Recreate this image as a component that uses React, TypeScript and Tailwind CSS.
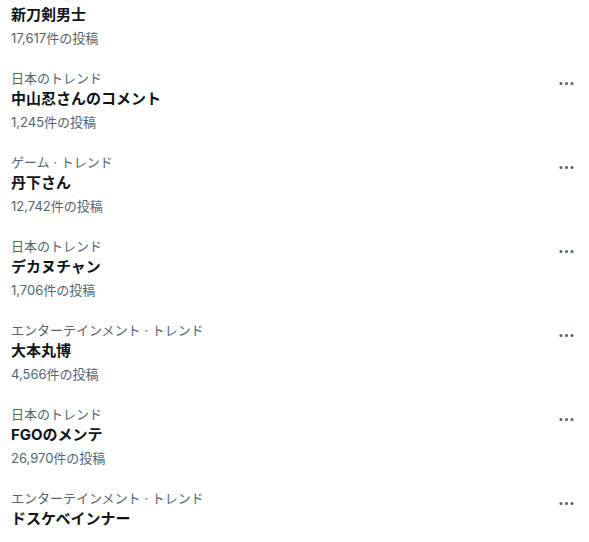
import React from 'react';

type Trend = {
    category: string;
    title: string;
    posts?: string;
    noMenu?: boolean;
};

const TRENDS: Trend[] = [
    { category: 'エンターテインメント · トレンド', title: '新刀剣男士', posts: '17,617件の投稿', noMenu: true },
    { category: '日本のトレンド', title: '中山忍さんのコメント', posts: '1,245件の投稿' },
    { category: 'ゲーム · トレンド', title: '丹下さん', posts: '12,742件の投稿' },
    { category: '日本のトレンド', title: 'デカヌチャン', posts: '1,706件の投稿' },
    { category: 'エンターテインメント · トレンド', title: '大本丸博', posts: '4,566件の投稿' },
    { category: '日本のトレンド', title: 'FGOのメンテ', posts: '26,970件の投稿' },
    { category: 'エンターテインメント · トレンド', title: 'ドスケベインナー' },
];

const MoreIcon = () => (
    <svg viewBox="0 0 24 24" className="w-[19px] h-[19px] fill-[#536471]" aria-hidden="true">
        <path d="M3 12c0-1.1.9-2 2-2s2 .9 2 2-.9 2-2 2-2-.9-2-2zm9 2c1.1 0 2-.9 2-2s-.9-2-2-2-2 .9-2 2 .9 2 2 2zm7 0c1.1 0 2-.9 2-2s-.9-2-2-2-2 .9-2 2 .9 2 2 2z" />
    </svg>
);

const TrendRow: React.FC<{ trend: Trend }> = ({ trend }) => (
    <div className="flex items-start justify-between pl-[11px] pr-[13px] pt-3 pb-3">
        <div className="flex flex-col">
            <span className="text-[13px] leading-4 text-[#536471]">{trend.category}</span>
            <span className="mt-[3px] text-[15px] leading-5 font-bold text-[#0f1419]">{trend.title}</span>
            {trend.posts && (
                <span className="mt-[5px] text-[13px] leading-4 text-[#536471]">{trend.posts}</span>
            )}
        </div>
        {!trend.noMenu && (
            <div className="mt-1">
                <MoreIcon />
            </div>
        )}
    </div>
);

export default function App() {
    return (
        <div
            className="w-[589px] h-[542px] overflow-hidden bg-white"
            style={{ fontFamily: 'Inter, "Noto Sans CJK JP", sans-serif' }}
        >
            <div className="-mt-[26px]">
                {TRENDS.map((t, i) => (
                    <TrendRow key={i} trend={t} />
                ))}
            </div>
        </div>
    );
}
